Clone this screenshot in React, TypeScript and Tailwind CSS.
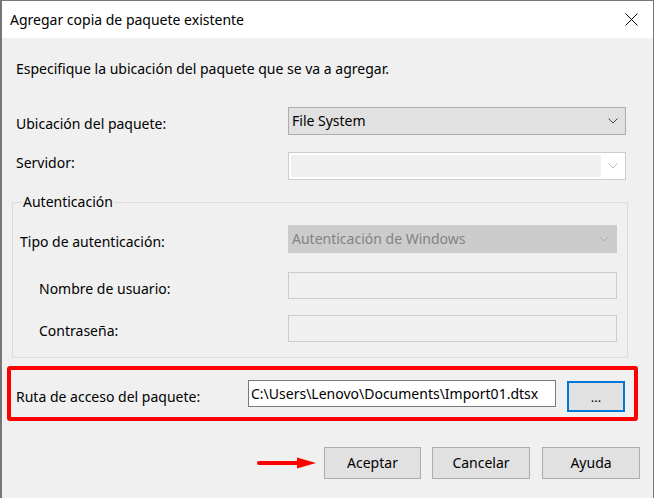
import React from 'react';

const Chevron: React.FC<{ color: string }> = ({ color }) => (
    <svg width="10" height="6" viewBox="0 0 10 6" className="shrink-0">
        <polyline points="0.5,0.5 5,5 9.5,0.5" fill="none" stroke={color} strokeWidth="1" />
    </svg>
);

const ArrowRight: React.FC = () => (
    <svg width="59" height="12" viewBox="0 0 59 12" className="shrink-0">
        <line x1="2" y1="6" x2="42" y2="6" stroke="#ff0000" strokeWidth="4" strokeLinecap="round" />
        <polygon points="40,0.5 59,6 40,11.5" fill="#ff0000" />
    </svg>
);

const App: React.FC = () => {
    return (
        <div
            className="w-[655px] h-[498px] bg-white overflow-hidden text-black"
            style={{ fontFamily: '"Noto Sans", "Open Sans", sans-serif' }}
        >
            <div className="w-[654px] h-[498px] border-l-2 border-t border-r border-[#767676] flex flex-col">
                {/* title bar */}
                <div className="h-[37px] bg-white flex items-center pl-[8px] pr-[15px] shrink-0">
                    <span className="text-[14px] leading-[20px] flex-1">Agregar copia de paquete existente</span>
                    <svg width="13" height="13" viewBox="0 0 13 13">
                        <line x1="0.5" y1="0.5" x2="12.5" y2="12.5" stroke="#000" strokeWidth="1" />
                        <line x1="12.5" y1="0.5" x2="0.5" y2="12.5" stroke="#000" strokeWidth="1" />
                    </svg>
                </div>

                {/* body */}
                <div className="flex-1 bg-[#f0f0f0] flex flex-col pl-[10px] text-[14px] leading-[20px]">
                    <div className="mt-[21px] pl-[4px] h-[20px]">Especifique la ubicación del paquete que se va a agregar.</div>

                    {/* Ubicación */}
                    <div className="mt-[28px] pl-[4px] flex items-start">
                        <div className="w-[272px] mt-[7px]">Ubicación del paquete:</div>
                        <div className="w-[338px] h-[28px] bg-[#e1e1e1] border border-[#adadad] flex items-center pl-[3px] pr-[7px]">
                            <span className="flex-1">File System</span>
                            <Chevron color="#444" />
                        </div>
                    </div>

                    {/* Servidor */}
                    <div className="mt-[17px] pl-[4px] flex items-start">
                        <div className="w-[272px] mt-[1px]">Servidor:</div>
                        <div className="w-[338px] h-[28px] bg-white border border-[#cccccc] flex items-center p-[2px] pr-[7px]">
                            <div className="w-[310px] h-full bg-[#f0f0f0]" />
                            <div className="flex-1" />
                            <Chevron color="#b8b8b8" />
                        </div>
                    </div>

                    {/* Autenticación group */}
                    <div className="mt-[22px] w-[616px] border border-[#dcdcdc] flex flex-col pl-[7px] pb-[15px]">
                        <div className="-mt-[11px] ml-[2px] w-fit px-[1px] h-[20px] bg-[#f0f0f0]">Autenticación</div>

                        <div className="mt-[13px] flex items-start">
                            <div className="w-[268px] mt-[7px]">Tipo de autenticación:</div>
                            <div className="w-[329px] h-[28px] bg-[#cccccc] border border-[#cccccc] flex items-center pl-[3px] pr-[7px] text-[#838383]">
                                <span className="flex-1">Autenticación de Windows</span>
                                <Chevron color="#b0b0b0" />
                            </div>
                        </div>

                        <div className="mt-[19px] flex items-start">
                            <div className="w-[268px] mt-[7px] pl-[19px]">Nombre de usuario:</div>
                            <div className="w-[329px] h-[27px] bg-[#f0f0f0] border border-[#cccccc]" />
                        </div>

                        <div className="mt-[16px] flex items-start">
                            <div className="w-[268px] mt-[6px] pl-[19px]">Contraseña:</div>
                            <div className="w-[329px] h-[27px] bg-[#f0f0f0] border border-[#cccccc]" />
                        </div>
                    </div>

                    {/* Ruta highlighted */}
                    <div className="mt-[8px] -ml-[5px] w-[631px] h-[55px] border-4 border-[#ff0000] rounded-[3px] flex items-start">
                        <div className="w-[237px] pl-[5px] mt-[17px]">Ruta de acceso del paquete:</div>
                        <div className="w-[308px] h-[27px] mt-[10px] bg-white border border-[#7a7a7a] flex items-center pl-[2px] overflow-hidden whitespace-nowrap">
                            C:\Users\Lenovo\Documents\Import01.dtsx
                        </div>
                        <button className="ml-[11px] mt-[11px] w-[58px] h-[31px] bg-[#e1e1e1] border-2 border-[#0078d7] flex items-center justify-center text-[13px]">
                            ...
                        </button>
                    </div>

                    {/* buttons */}
                    <div className="mt-[26px] flex items-center justify-end pr-[13px]">
                        <ArrowRight />
                        <button className="ml-[8px] w-[97px] h-[32px] bg-[#e1e1e1] border border-[#adadad]">Aceptar</button>
                        <button className="ml-[11px] w-[98px] h-[32px] bg-[#e1e1e1] border border-[#adadad]">Cancelar</button>
                        <button className="ml-[12px] w-[98px] h-[32px] bg-[#e1e1e1] border border-[#adadad]">Ayuda</button>
                    </div>
                </div>
            </div>
        </div>
    );
};

export default App;
